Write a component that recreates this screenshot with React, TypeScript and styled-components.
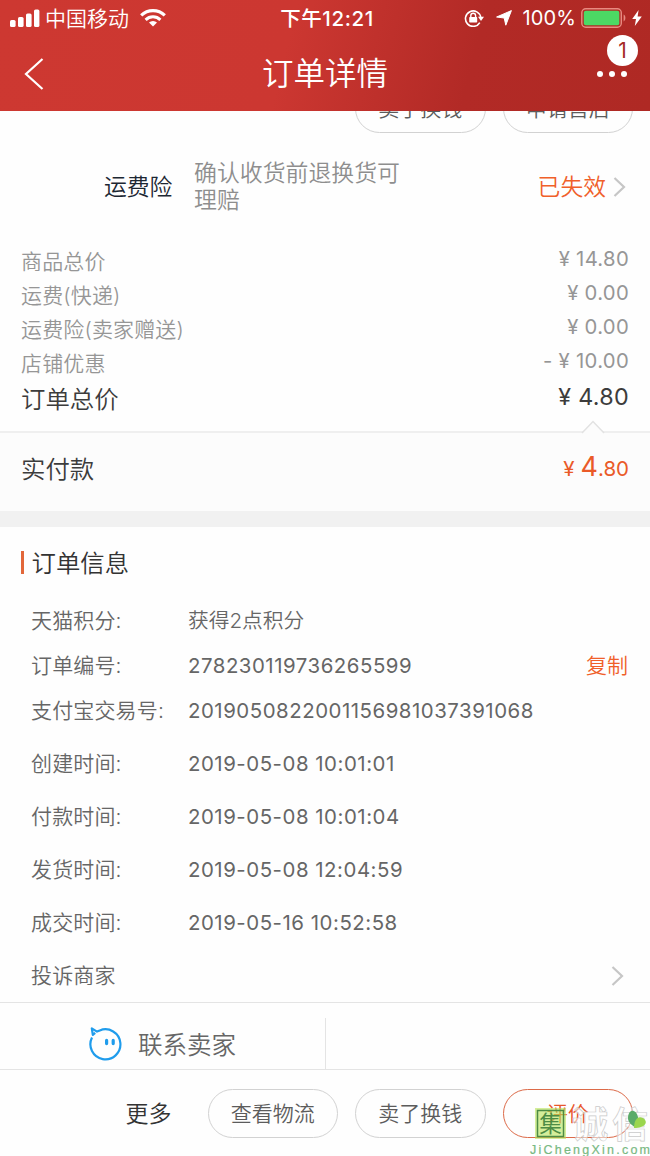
import React from "react";
import styled, { createGlobalStyle } from "styled-components";

const GlobalStyle = createGlobalStyle`
  * { box-sizing: border-box; }
  body {
    margin: 0;
    background: #fefefe;
    font-family: Inter, "Noto Sans CJK SC", sans-serif;
    font-weight: 350;
    line-height: 30px;
    color: #666;
  }
  svg { flex: none; display: block; }
`;

const Screen = styled.div`
  width: 650px;
  height: 1156px;
  overflow: hidden;
  display: flex;
  flex-direction: column;
  background: #fefefe;
  white-space: nowrap;
`;

const Header = styled.header`
  position: relative;
  z-index: 1;
  flex: none;
  height: 111px;
  color: #fff;
  background: linear-gradient(104deg, #cd3831 0%, #cc3731 44%, #b22a26 72%, #af2924 100%);
`;

const StatusBar = styled.div`
  display: grid;
  grid-template-columns: 1fr auto 1fr;
  align-items: center;
  height: 36px;
  padding: 0 8px 0 10px;
`;

const StatusGroup = styled.div<{ $end?: boolean }>`
  display: flex;
  align-items: center;
  justify-content: ${(p) => (p.$end ? "flex-end" : "flex-start")};
`;

const Carrier = styled.span`
  margin: 0 11px 0 5px;
  padding-top: 1px;
  font-size: 21px;
`;

const Clock = styled.span`
  padding: 1px 0 0 2px;
  font-size: 20.5px;
  font-weight: 500;
  letter-spacing: 0.6px;
`;

const Percent = styled.span`
  margin: 0 5px 0 11px;
  font-size: 20px;
  font-weight: 400;
  letter-spacing: 0.1px;
`;

const LocationSlot = styled.span`
  margin-left: 11px;
`;

const BoltSlot = styled.span`
  margin-left: 5px;
`;

const NavBar = styled.div`
  display: grid;
  grid-template-columns: 1fr auto 1fr;
  align-items: center;
  height: 75px;
  padding: 0 23px;
`;

const Title = styled.h1`
  margin: 0;
  font-size: 31.5px;
  font-weight: 350;
  line-height: 46px;
`;

const MoreMenu = styled.div`
  position: relative;
  justify-self: end;
  display: flex;
  gap: 6px;
`;

const Dot = styled.i`
  width: 6px;
  height: 6px;
  border-radius: 50%;
  background: #fff;
`;

const Badge = styled.span`
  position: absolute;
  right: -11px;
  top: -36px;
  width: 31px;
  height: 31px;
  border-radius: 50%;
  background: #fff;
  color: #a52a26;
  font-size: 21px;
  font-weight: 400;
  line-height: 31px;
  text-align: center;
`;

const Content = styled.main`
  flex: none;
  height: 918px;
  margin-top: -27px;
`;

const ButtonRow = styled.div`
  display: flex;
  align-items: center;
  justify-content: flex-end;
  gap: 17px;
  padding-right: 17px;
`;

const PillButton = styled.button<{ $primary?: boolean }>`
  width: 130.5px;
  height: 49px;
  padding: 0;
  border: 1px solid ${(p) => (p.$primary ? "#dc6a48" : "#d2d2d2")};
  border-radius: 25px;
  background: transparent;
  color: ${(p) => (p.$primary ? "#e8562c" : "#5c5c5c")};
  font: inherit;
  font-size: 21px;
  line-height: 47px;
`;

const InsuranceRow = styled.section`
  display: flex;
  align-items: center;
  height: 106px;
  padding: 2px 23px 0 104px;
`;

const InsuranceName = styled.span`
  width: 90px;
  font-size: 22.8px;
  color: #1c2733;
`;

const InsuranceText = styled.span`
  width: 214px;
  font-size: 22.9px;
  line-height: 27px;
  color: #8e8e8e;
  white-space: normal;
`;

const InsuranceState = styled.span`
  margin: 0 7px 0 auto;
  font-size: 22.8px;
  color: #f0602a;
`;

const PriceList = styled.section`
  display: flex;
  flex-direction: column;
  height: 192px;
  padding: 5px 21px 0;
`;

const PriceRow = styled.div<{ $total?: boolean }>`
  display: flex;
  justify-content: space-between;
  height: ${(p) => (p.$total ? 38 : 34)}px;
  font-size: ${(p) => (p.$total ? 24.4 : 21)}px;
  line-height: ${(p) => (p.$total ? 38 : 34)}px;
  color: ${(p) => (p.$total ? "#3c3c3c" : "#969696")};
`;

const PriceLabel = styled.span`
  margin-top: 1px;
  letter-spacing: 0.15px;
`;

const Amount = styled.span<{ $large?: boolean }>`
  margin-top: -2px;
  font-size: ${(p) => (p.$large ? 23.3 : 20.3)}px;
  font-weight: 400;
  letter-spacing: 0.3px;
`;

const PaidRow = styled.section`
  position: relative;
  display: flex;
  align-items: center;
  justify-content: space-between;
  height: 80px;
  padding: 0 21px 6px;
  border-top: 2px solid #efefef;
  background: #fcfcfc;
  font-size: 24.4px;
  color: #3c3c3c;
`;

const Notch = styled.svg`
  position: absolute;
  right: 45px;
  top: -13px;
`;

const PaidAmount = styled.span`
  display: flex;
  align-items: baseline;
  padding-bottom: 2px;
  font-size: 20.5px;
  font-weight: 400;
  color: #ea5a28;
`;

const PaidYen = styled.span`
  margin-right: 6px;
`;

const PaidWhole = styled.span`
  font-size: 27px;
`;

const Band = styled.div`
  height: 16px;
  background: #f1f1f1;
`;

const SectionTitle = styled.h2`
  display: flex;
  align-items: center;
  gap: 8px;
  height: 71px;
  margin: 0;
  padding-left: 21px;
  font-size: 24.4px;
  font-weight: 350;
  color: #333;

  &::before {
    content: "";
    width: 2.5px;
    height: 23px;
    background: #e2673a;
  }
`;

const InfoRow = styled.div<{ $tall?: boolean }>`
  display: flex;
  align-items: center;
  height: ${(p) => (p.$tall ? 53 : 45)}px;
  padding: ${(p) => (p.$tall ? 9 : 1)}px 22px 0 31px;
  font-size: 21px;
  color: #666;
`;

const ComplaintRow = styled(InfoRow)`
  justify-content: space-between;
  padding-right: 25px;
`;

const InfoLabel = styled.span`
  width: 157px;
  letter-spacing: 0.15px;
`;

const InfoValue = styled.span`
  flex: 1;
  font-size: 20.7px;
`;

/* Digits are set a step heavier so they hold the same grey as the Chinese text. */
const Digits = styled.span`
  font-size: 20.4px;
  font-weight: 400;
  letter-spacing: 0.53px;
`;

const CopyLink = styled.span`
  color: #f0602a;
`;

const ContactBar = styled.section`
  display: flex;
  height: 68px;
  flex: none;
  border-top: 1px solid #e4e4e4;
  border-bottom: 1px solid #e4e4e4;
`;

const ContactSeller = styled.div`
  display: flex;
  align-items: center;
  gap: 15px;
  width: 326px;
  padding-left: 88px;
  margin-top: 15px;
  border-right: 1px solid #e4e4e4;
  font-size: 24.5px;
`;

const ContactLabel = styled.span`
  padding-top: 2px;
`;

const Footer = styled.footer`
  position: relative;
  display: flex;
  align-items: center;
  height: 87px;
  flex: none;
`;

const MoreLink = styled.span`
  width: 82px;
  margin-left: auto;
  font-size: 23px;
  color: #333;
`;

const Watermark = styled.svg`
  position: absolute;
  left: 530px;
  top: 36px;
  overflow: visible;
`;

const SignalIcon = () => (
  <svg width="30" height="18" viewBox="0 0 30 18" fill="#fff">
    <rect x="0" y="11" width="5.6" height="7" rx="1.6" />
    <rect x="8" y="8" width="5.6" height="10" rx="1.6" />
    <rect x="16" y="4.5" width="5.6" height="13.5" rx="1.6" />
    <rect x="24" y="0.5" width="5.4" height="17.5" rx="1.6" />
  </svg>
);

const WifiIcon = () => (
  <svg width="26" height="18" viewBox="0 0 26 18" fill="none" stroke="#fff">
    <path d="M1.2 6.4a17 17 0 0 1 23.6 0" strokeWidth="3.2" />
    <path d="M5.6 10.8a10.7 10.7 0 0 1 14.8 0" strokeWidth="3" />
    <path d="M13 17.6l-4-4.1a5.8 5.8 0 0 1 8 0z" fill="#fff" stroke="none" />
  </svg>
);

const RotationLockIcon = () => (
  <svg width="21" height="18" viewBox="0 0 21 18">
    <path d="M15.8 13.6A7.7 7.7 0 1 1 16.8 8.6" fill="none" stroke="#fff" strokeWidth="1.6" />
    <path d="M14 7.8h6l-3 4.2z" fill="#fff" />
    <rect x="5.2" y="8" width="8" height="5.6" rx="0.8" fill="#fff" />
    <path d="M6.8 8.4V6.7a2.4 2.4 0 0 1 4.8 0v1.7" fill="none" stroke="#fff" strokeWidth="1.4" />
  </svg>
);

const LocationIcon = () => (
  <svg width="16" height="16" viewBox="0 0 16 16" fill="#fff">
    <path d="M15.4 0.6L9.8 15.2 8.2 8 0.6 7z" stroke="#fff" strokeWidth="1" strokeLinejoin="round" />
  </svg>
);

const BatteryIcon = () => (
  <svg width="46" height="20" viewBox="0 0 46 20">
    <rect x="0.8" y="0.8" width="39.5" height="18.4" rx="4" fill="none" stroke="#e88a80" strokeWidth="1.4" />
    <rect x="2.8" y="2.8" width="35.5" height="14.4" rx="2" fill="#4cd964" />
    <path d="M42.6 6.6c2.4 1 2.4 5.8 0 6.8z" fill="#e88a80" />
  </svg>
);

const BoltIcon = () => (
  <svg width="10" height="16" viewBox="0 0 10 16" fill="#fff">
    <path d="M6.6 0L0.2 9h3.8L2.8 16 9.8 6.4H5.6z" />
  </svg>
);

const BackIcon = () => (
  <svg width="22" height="32" viewBox="0 0 22 32" fill="none" stroke="#fff" strokeWidth="2.2">
    <path d="M19.5 1L3 16l16.5 15" />
  </svg>
);

const ChevronIcon = () => (
  <svg width="14" height="20" viewBox="0 0 14 20" fill="none" stroke="#c6c6c6" strokeWidth="2.2">
    <path d="M1.5 1l9.5 9-9.5 9" />
  </svg>
);

const WangwangIcon = () => (
  <svg width="35" height="34" viewBox="0 0 35 34" fill="none" stroke="#1f9cec" strokeWidth="2.2" strokeLinejoin="round">
    <path d="M4 10.6A15 15 0 1 0 11.8 3.4L9 4.6 3.8 1.4l1 6.4 2.4-2" />
    <path d="M18.6 13.4v3.2M25.2 13.4v3.2" strokeWidth="3.2" strokeLinecap="round" />
  </svg>
);

const prices = [
  ["商品总价", "¥ 14.80"],
  ["运费(快递)", "¥ 0.00"],
  ["运费险(卖家赠送)", "¥ 0.00"],
  ["店铺优惠", "- ¥ 10.00"],
];

const infos = [
  { label: "订单编号:", value: "278230119736265599", copy: true },
  { label: "支付宝交易号:", value: "2019050822001156981037391068" },
  { label: "创建时间:", value: "2019-05-08 10:01:01", tall: true },
  { label: "付款时间:", value: "2019-05-08 10:01:04", tall: true },
  { label: "发货时间:", value: "2019-05-08 12:04:59", tall: true },
  { label: "成交时间:", value: "2019-05-16 10:52:58", tall: true },
];

export default function App() {
  return (
    <Screen>
      <GlobalStyle />
      <Header>
        <StatusBar>
          <StatusGroup>
            <SignalIcon />
            <Carrier>中国移动</Carrier>
            <WifiIcon />
          </StatusGroup>
          <Clock>下午12:21</Clock>
          <StatusGroup $end>
            <RotationLockIcon />
            <LocationSlot>
              <LocationIcon />
            </LocationSlot>
            <Percent>100%</Percent>
            <BatteryIcon />
            <BoltSlot>
              <BoltIcon />
            </BoltSlot>
          </StatusGroup>
        </StatusBar>
        <NavBar>
          <BackIcon />
          <Title>订单详情</Title>
          <MoreMenu>
            <Dot />
            <Dot />
            <Dot />
            <Badge>1</Badge>
          </MoreMenu>
        </NavBar>
      </Header>

      <Content>
        <ButtonRow>
          <PillButton>卖了换钱</PillButton>
          <PillButton>申请售后</PillButton>
        </ButtonRow>
        <InsuranceRow>
          <InsuranceName>运费险</InsuranceName>
          <InsuranceText>确认收货前退换货可理赔</InsuranceText>
          <InsuranceState>已失效</InsuranceState>
          <ChevronIcon />
        </InsuranceRow>
        <PriceList>
          {prices.map(([label, amount]) => (
            <PriceRow key={label}>
              <PriceLabel>{label}</PriceLabel>
              <Amount>{amount}</Amount>
            </PriceRow>
          ))}
          <PriceRow $total>
            <span>订单总价</span>
            <Amount $large>¥ 4.80</Amount>
          </PriceRow>
        </PriceList>
        <PaidRow>
          <Notch width="24" height="14" viewBox="0 0 24 14">
            <path d="M1 13L12 1.5 23 13" fill="#fcfcfc" stroke="#e2e2e2" strokeWidth="1.5" />
          </Notch>
          <span>实付款</span>
          <PaidAmount>
            <PaidYen>¥</PaidYen>
            <PaidWhole>4</PaidWhole>.80
          </PaidAmount>
        </PaidRow>
        <Band />
        <SectionTitle>订单信息</SectionTitle>
        <InfoRow>
          <InfoLabel>天猫积分:</InfoLabel>
          <InfoValue>获得2点积分</InfoValue>
        </InfoRow>
        {infos.map((row) => (
          <InfoRow key={row.label} $tall={row.tall}>
            <InfoLabel>{row.label}</InfoLabel>
            <InfoValue>
              <Digits>{row.value}</Digits>
            </InfoValue>
            {row.copy && <CopyLink>复制</CopyLink>}
          </InfoRow>
        ))}
        <ComplaintRow $tall>
          <InfoLabel>投诉商家</InfoLabel>
          <ChevronIcon />
        </ComplaintRow>
      </Content>

      <ContactBar>
        <ContactSeller>
          <WangwangIcon />
          <ContactLabel>联系卖家</ContactLabel>
        </ContactSeller>
      </ContactBar>

      <Footer>
        <MoreLink>更多</MoreLink>
        <ButtonRow>
          <PillButton>查看物流</PillButton>
          <PillButton>卖了换钱</PillButton>
          <PillButton $primary>评价</PillButton>
        </ButtonRow>
        <Watermark width="120" height="50" viewBox="0 0 120 50" fontFamily="Noto Sans CJK SC, sans-serif">
          <rect x="5" y="2" width="31" height="31" fill="#b8e356" fillOpacity="0.6" />
          <rect x="7.5" y="4.5" width="26" height="26" fill="none" stroke="#4d8c45" strokeWidth="1.5" />
          <text x="9.3" y="26.3" fontSize="22.5" fontWeight="400" fill="#4d8c45">集</text>
          <text x="42" y="32" fontSize="36" fontWeight="700" fill="#fff" fillOpacity="0.55" stroke="#cacaca" strokeWidth="0.7" textLength="76">诚信</text>
          <path d="M98 12c0-9 8-10 10-1 0 4-1 7-3 10-4-2-7-5-7-9z" fill="#5bab69" />
          <path d="M104 22c0-7 3-13 9-10 6 4 2 10-9 10z" fill="#9ad64e" />
          <text x="0" y="48" fontSize="12.5" fontFamily="Liberation Sans, sans-serif" fill="#78b982" stroke="#78b982" strokeWidth="0.2" textLength="120">JiChengXin.com</text>
        </Watermark>
      </Footer>
    </Screen>
  );
}
